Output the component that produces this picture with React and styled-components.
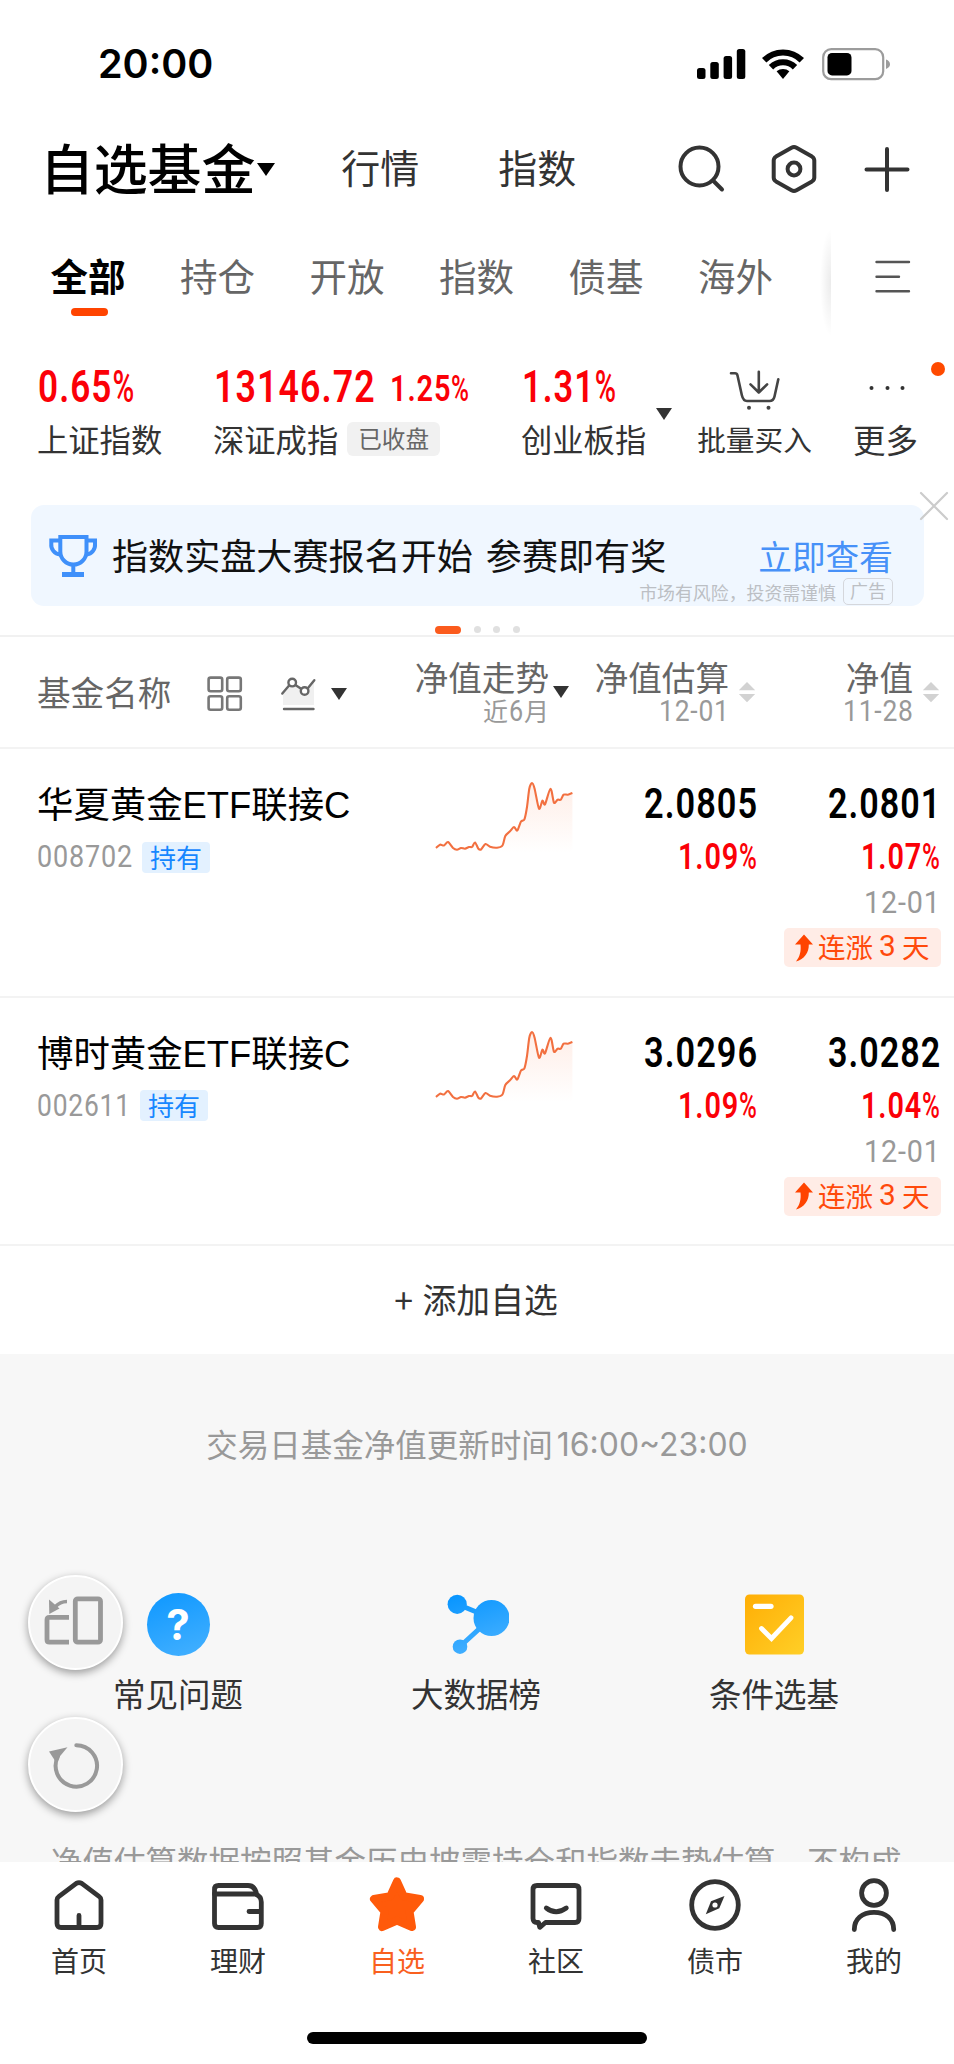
import React, { useLayoutEffect, useRef, useState } from "react";
import styled, { createGlobalStyle, css } from "styled-components";

const CJK = `"Noto Sans CJK SC", "Noto Sans", sans-serif`;
const DIGITS = `Roboto, "Liberation Sans", sans-serif`;
const RED = "#fb0007";
const ORANGE = "#ff4a0c";

const GlobalStyle = createGlobalStyle`
  * { box-sizing: border-box; }
  body { margin: 0; background: #fff; font-family: ${CJK}; }
  svg { display: block; flex: none; }
`;

const Screen = styled.div`
  position: relative;
  width: 954px;
  height: 2064px;
  overflow: hidden;
  display: flex;
  flex-direction: column;
  background: #fff;
  color: #333;
`;

const Text = styled.span`
  display: block;
  flex: none;
  white-space: nowrap;
  font-size: ${(p) => p.$size}px;
  line-height: ${(p) => p.$lh || 40}px;
  font-weight: ${(p) => p.$weight || 400};
  color: ${(p) => p.$color || "#333"};
`;

/* ---------- condensed figures ---------- */

const FigureBox = styled.span`
  display: block;
  flex: none;
  width: ${(p) => p.$width}px;
  height: ${(p) => p.$lh}px;
  line-height: ${(p) => p.$lh}px;
  font-family: ${DIGITS};
  font-size: ${(p) => p.$size}px;
  font-weight: ${(p) => p.$weight};
  color: ${(p) => p.$color};
`;

const FigureText = styled.span`
  display: inline-block;
  white-space: nowrap;
  letter-spacing: 0.03em;
  margin-right: -0.03em;
  transform-origin: 0 50%;
`;

const Percent = styled.span`
  display: inline-block;
  font-weight: 500;
  transform: scaleX(0.84);
  transform-origin: 0 50%;
  margin-right: -0.12em;
`;

function Figure({ children, width, size, lh = 40, weight = 600, color = "#000" }) {
  const ref = useRef(null);
  const [scale, setScale] = useState(1);
  useLayoutEffect(() => {
    setScale(width / (ref.current.offsetWidth - size * 0.03));
  }, [children, width, size]);
  const percent = children.endsWith("%");
  return (
    <FigureBox $width={width} $lh={lh} $size={size} $weight={weight} $color={color}>
      <FigureText ref={ref} style={{ transform: `scaleX(${scale})` }}>
        {percent ? children.slice(0, -1) : children}
        {percent && <Percent>%</Percent>}
      </FigureText>
    </FigureBox>
  );
}

const Caret = styled.i`
  flex: none;
  width: 0;
  height: 0;
  border-left: ${(p) => p.$w / 2}px solid transparent;
  border-right: ${(p) => p.$w / 2}px solid transparent;
  border-top: ${(p) => p.$h}px solid ${(p) => p.$color || "#333"};
`;

/* ---------- status bar ---------- */

const StatusBar = styled.div`
  flex: none;
  height: 108px;
  padding: 19px 64px 0 98px;
  display: flex;
  align-items: center;
`;

const Clock = styled.div`
  flex: 1;
  font: 600 39.5px/48px Inter, sans-serif;
  color: #000;
`;

const Battery = styled.svg`
  margin-left: 17px;
`;
const Wifi = styled.svg`
  margin-left: 15px;
`;

function Status() {
  return (
    <StatusBar>
      <Clock>20:00</Clock>
      <svg width="49" height="32" viewBox="0 0 49 32">
        <rect x="0" y="20" width="8.5" height="11" rx="2.5" />
        <rect x="13.3" y="14" width="8.5" height="17" rx="2.5" />
        <rect x="26.6" y="8" width="8.5" height="23" rx="2.5" />
        <rect x="39.8" y="1" width="8.5" height="30" rx="2.5" />
      </svg>
      <Wifi width="44" height="32" viewBox="0 0 44 32">
        <g fill="none" stroke="#000" strokeWidth="6.2">
          <path d="M3.2 12.3A26.6 26.6 0 0 1 40.8 12.3" />
          <path d="M10 19.2A17 17 0 0 1 34 19.2" />
        </g>
        <path d="M15.6 23.3A9.8 9.8 0 0 1 28.4 23.3L22 31Z" />
      </Wifi>
      <Battery width="68" height="34" viewBox="0 0 68 34">
        <rect x="1.2" y="2.2" width="60" height="30" rx="8" fill="none" stroke="#9c9c9c" strokeWidth="2.2" />
        <rect x="5.5" y="6" width="24" height="22.4" rx="4.5" />
        <path d="M64 12.5q4 1.5 4 4.7t-4 4.7Z" fill="#9c9c9c" />
      </Battery>
    </StatusBar>
  );
}

/* ---------- header ---------- */

const Header = styled.header`
  flex: none;
  height: 122px;
  padding: 0 43px 0 40px;
  display: flex;
  align-items: center;
`;

const PageTitle = styled.h1`
  margin: 0 2px 5px 0;
  font-size: 54px;
  line-height: 60px;
  font-weight: 500;
  letter-spacing: -0.2px;
  color: #000;
`;

const HeaderLink = styled.a`
  margin: 0 0 6px ${(p) => p.$left}px;
  font-size: 39px;
  line-height: 50px;
  color: #333;
`;

const HeaderActions = styled.div`
  margin-left: auto;
  display: flex;
  gap: 45px;
`;

function Top() {
  return (
    <Header>
      <PageTitle>自选基金</PageTitle>
      <Caret $w={19} $h={13} $color="#000" />
      <HeaderLink $left={66}>行情</HeaderLink>
      <HeaderLink $left={79}>指数</HeaderLink>
      <HeaderActions>
        <svg width="48" height="48" viewBox="0 0 48 48" fill="none" stroke="#333" strokeWidth="4" strokeLinecap="round">
          <circle cx="22.5" cy="21.5" r="19" />
          <path d="M36 35.5L45 44.5" />
        </svg>
        <svg width="48" height="48" viewBox="0 0 48 48" fill="none" stroke="#333" strokeWidth="4" strokeLinejoin="round">
          <path d="M21.5 2.8Q24 1.4 26.5 2.8L42 11.6Q44.3 13 44.3 15.6V32.4Q44.3 35 42 36.4L26.5 45.2Q24 46.6 21.5 45.2L6 36.4Q3.7 35 3.7 32.4V15.6Q3.7 13 6 11.6Z" />
          <circle cx="24" cy="24" r="6.4" />
        </svg>
        <svg width="48" height="48" viewBox="0 0 48 48" fill="none" stroke="#333" strokeWidth="4" strokeLinecap="round">
          <path d="M3.5 24.5H44.5M24 4V45" />
        </svg>
      </HeaderActions>
    </Header>
  );
}

/* ---------- category tabs ---------- */

const TabStrip = styled.nav`
  flex: none;
  height: 105px;
  display: flex;
`;

const TabList = styled.div`
  position: relative;
  flex: 1;
  padding-left: 50.5px;
  overflow: hidden;
  display: flex;
  gap: 54.5px;
  &::after {
    content: "";
    position: absolute;
    right: 0;
    top: 0;
    width: 12px;
    height: 105px;
    background: radial-gradient(ellipse 11px 54px at 100% 50%, rgba(0, 0, 0, 0.08), transparent);
  }
`;

const Tab = styled.div`
  flex: none;
  padding-top: 21px;
  display: flex;
  flex-direction: column;
  align-items: center;
  gap: 9px;
  font-size: 37.5px;
  line-height: 48px;
  color: #666;
  ${(p) =>
    p.$active &&
    css`
      font-weight: 700;
      color: #000;
      &::after {
        content: "";
        width: 37px;
        height: 8px;
        margin-left: 2px;
        border-radius: 4px;
        background: #ff4400;
      }
    `}
`;

const TabMenu = styled.div`
  width: 123px;
  padding: 30px 0 0 44px;
`;

/* ---------- index ticker ---------- */

const Ticker = styled.section`
  position: relative;
  flex: none;
  height: 170px;
  padding: 23px 0 0 38px;
  display: flex;
  align-items: flex-start;
`;

const TickerItem = styled.div`
  flex: none;
  width: ${(p) => p.$width}px;
  margin-right: ${(p) => p.$gap || 0}px;
`;

const TickerTop = styled.div`
  height: 60px;
  display: flex;
  align-items: center;
  justify-content: ${(p) => (p.$center ? "center" : "flex-start")};
  gap: 15px;
`;

const TickerBottom = styled.div`
  height: 42px;
  margin-left: -1px;
  display: flex;
  align-items: center;
  justify-content: ${(p) => (p.$center ? "center" : "flex-start")};
  gap: 9px;
`;

const ClosedTag = styled.span`
  height: 34px;
  padding: 0 11px;
  border-radius: 6px;
  background: #f1f1f1;
  color: #666;
  font-size: 23.6px;
  line-height: 32px;
  white-space: nowrap;
`;

const CaretSlot = styled.div`
  width: 16px;
  margin: 50px 26px 0 0;
`;

const UnreadDot = styled.i`
  position: absolute;
  left: 931px;
  top: 31px;
  width: 14px;
  height: 14px;
  margin-top: -4px;
  border-radius: 50%;
  background: #ff4a00;
`;

function Indices() {
  return (
    <Ticker>
      <TickerItem $width={176}>
        <TickerTop><Figure width={96} size={43.5} color={RED}>0.65%</Figure></TickerTop>
        <TickerBottom><Text $size={31.3}>上证指数</Text></TickerBottom>
      </TickerItem>
      <TickerItem $width={308}>
        <TickerTop>
          <Figure width={161} size={43.5} color={RED}>13146.72</Figure>
          <Figure width={79} size={37} lh={37} color={RED}>1.25%</Figure>
        </TickerTop>
        <TickerBottom>
          <Text $size={31.3}>深证成指</Text>
          <ClosedTag>已收盘</ClosedTag>
        </TickerBottom>
      </TickerItem>
      <TickerItem $width={134}>
        <TickerTop><Figure width={94} size={43.5} color={RED}>1.31%</Figure></TickerTop>
        <TickerBottom><Text $size={31.3}>创业板指</Text></TickerBottom>
      </TickerItem>
      <CaretSlot><Caret as="div" $w={16} $h={12} /></CaretSlot>
      <TickerItem $width={114} $gap={41}>
        <TickerTop $center>
          <svg width="52" height="44" viewBox="0 0 52 44" fill="none" stroke="#444" strokeWidth="2.6" strokeLinecap="round" strokeLinejoin="round">
            <path d="M2 7.3H6Q8 7.3 8.5 9.5L12.8 29Q14.2 35 18 35H40.5Q44.5 35 45.5 30.5L49.3 13.3" />
            <path d="M29.8 5.7V26.5M21.5 18.3L29.8 26.5L38.1 18.3" />
            <circle cx="20" cy="41.7" r="2" fill="#444" stroke="none" />
            <circle cx="39.5" cy="41.7" r="2" fill="#444" stroke="none" />
          </svg>
        </TickerTop>
        <TickerBottom $center><Text $size={28.7}>批量买入</Text></TickerBottom>
      </TickerItem>
      <TickerItem $width={66}>
        <TickerTop $center>
          <svg width="40" height="8" viewBox="0 0 40 8" fill="#333">
            <circle cx="5.5" cy="4" r="2" />
            <circle cx="21.5" cy="4" r="2" />
            <circle cx="36.5" cy="4" r="2" />
          </svg>
        </TickerTop>
        <TickerBottom $center><Text $size={32.5}>更多</Text></TickerBottom>
      </TickerItem>
      <UnreadDot />
    </Ticker>
  );
}

/* ---------- promo banner ---------- */

const Banner = styled.section`
  position: relative;
  flex: none;
  width: 893px;
  height: 101px;
  margin-left: 31px;
  padding: 0 31px 0 16px;
  border-radius: 13px;
  background: #f0f7ff;
  display: flex;
  align-items: center;
`;

const BannerTitle = styled.div`
  margin: 0 auto 3px 12px;
  font-size: 36.1px;
  line-height: 48px;
  word-spacing: 5px;
  color: #111;
  white-space: nowrap;
`;

const BannerAside = styled.div`
  display: flex;
  flex-direction: column;
  align-items: flex-end;
  padding-top: 28px;
`;

const BannerAction = styled.a`
  font-size: 33.7px;
  line-height: 44px;
  color: #4791f8;
`;

const Disclaimer = styled.div`
  display: flex;
  align-items: center;
  gap: 7px;
  font-size: 17.9px;
  line-height: 26px;
  margin-left: -160px;
  color: #bcbfc4;
`;

const AdTag = styled.span`
  height: 27px;
  padding: 0 6px;
  border: 1.5px solid #d5d7dc;
  border-radius: 5px;
  font-size: 18px;
  line-height: 23px;
`;

const BannerClose = styled.svg`
  position: absolute;
  right: -25px;
  top: -14px;
`;

const Pager = styled.div`
  flex: none;
  height: 31px;
  padding: 20px 0 0 435px;
  border-bottom: 2px solid #f1f1f1;
  display: flex;
  align-items: flex-start;
  gap: 12.5px;
`;

const PagerDot = styled.i`
  width: ${(p) => (p.$active ? 26 : 7)}px;
  height: ${(p) => (p.$active ? 8 : 7)}px;
  border-radius: 4px;
  background: ${(p) => (p.$active ? "#fb5b1d" : "#e0e0e0")};
`;

function Promo() {
  return (
    <>
      <Banner>
        <svg width="53" height="48" viewBox="0 0 53 48" fill="none" stroke="#3f90fa" strokeWidth="4">
          <path d="M13.3 5H39.5V19.5A13.1 13.1 0 0 1 13.3 19.5Z" />
          <path d="M13 8.5H4.3V12A9.5 9.5 0 0 0 13 22.5M40 8.5H48V12A9.5 9.5 0 0 1 39.5 22.5M26.3 32V42" />
          <path d="M15 42.5H37" strokeWidth="5" />
        </svg>
        <BannerTitle>指数实盘大赛报名开始 参赛即有奖</BannerTitle>
        <BannerAside>
          <BannerAction>立即查看</BannerAction>
          <Disclaimer>
            市场有风险，投资需谨慎<AdTag>广告</AdTag>
          </Disclaimer>
        </BannerAside>
        <BannerClose width="30" height="30" viewBox="0 0 30 30" fill="none" stroke="#ccc" strokeWidth="2.2" strokeLinecap="round">
          <path d="M2 2L28 28M28 2L2 28" />
        </BannerClose>
      </Banner>
      <Pager>
        <PagerDot $active />
        <PagerDot />
        <PagerDot />
        <PagerDot />
      </Pager>
    </>
  );
}

/* ---------- fund table ---------- */

const TableRow = styled.div`
  flex: none;
  height: ${(p) => p.$height}px;
  border-bottom: 2px solid #f3f3f3;
  display: grid;
  grid-template-columns: 415px 156px 186px 184px;
`;

const NameHeading = styled.div`
  padding: 0 0 0 37px;
  display: flex;
  align-items: center;
`;

const ViewIcons = styled.div`
  display: flex;
  align-items: center;
  margin: 3px 0 0 36px;
`;

const ColumnHeading = styled.div`
  padding: ${(p) => (p.$caret ? "0 2px 0 0" : "0 1px 0 0")};
  display: flex;
  justify-content: flex-end;
  align-items: center;
  gap: ${(p) => (p.$caret ? 4 : 9)}px;
`;

const ColumnLabel = styled.div`
  display: flex;
  flex-direction: column;
  align-items: flex-end;
  padding-bottom: 5px;
`;

const ColumnSub = styled.div`
  height: 26px;
  display: flex;
  align-items: center;
  gap: 1px;
`;

const SortIcon = () => (
  <svg width="18" height="22" viewBox="0 0 18 22" fill="#d2d2d2">
    <path d="M9 1L17.2 9.3H.8Z" />
    <path d="M9 21.3L17.2 13H.8Z" />
  </svg>
);

function TableHead() {
  return (
    <TableRow $height={112}>
      <NameHeading>
        <Text $size={33.6} $color="#666">基金名称</Text>
        <ViewIcons>
          <svg width="36" height="36" viewBox="0 0 36 36" fill="none" stroke="#777" strokeWidth="2.6">
            <rect x="1.6" y="1.6" width="13.6" height="13.6" rx="2" />
            <rect x="20.2" y="1.6" width="13.6" height="13.6" rx="2" />
            <rect x="1.6" y="20.2" width="13.6" height="13.6" rx="2" />
            <rect x="20.2" y="20.2" width="13.6" height="13.6" rx="2" />
          </svg>
          <svg width="88" height="36" viewBox="-37 0 88 36" fill="none" stroke="#666" strokeWidth="2.4" strokeLinecap="round">
            <path d="M3 18L12 7L24 15.5L34 5V29H3Z" fill="#f0f0f0" stroke="none" />
            <path d="M2.3 17.6L9.3 9.3M15.4 9L21.5 13M27.8 12.3L34.3 4.3" />
            <circle cx="12.2" cy="6.6" r="3.8" fill="#fff" />
            <circle cx="24.6" cy="15" r="3.8" fill="#fff" />
            <path d="M4 33H33.5" />
          </svg>
          <Caret $w={16} $h={12} />
        </ViewIcons>
      </NameHeading>
      <ColumnHeading $caret>
        <ColumnLabel>
          <Text $size={33.6} $color="#666" $lh={42}>净值走势</Text>
          <ColumnSub>
            <Text $size={25} $lh={25} $color="#999">近</Text>
            <Figure width={14} size={29} lh={28} weight={400} color="#999">6</Figure>
            <Text $size={25} $lh={25} $color="#999">月</Text>
          </ColumnSub>
        </ColumnLabel>
        <Caret $w={16} $h={12} />
      </ColumnHeading>
      <ColumnHeading>
        <ColumnLabel>
          <Text $size={33.6} $color="#666" $lh={42}>净值估算</Text>
          <ColumnSub><Figure width={70} size={29.5} lh={26} weight={400} color="#999">12-01</Figure></ColumnSub>
        </ColumnLabel>
        <SortIcon />
      </ColumnHeading>
      <ColumnHeading>
        <ColumnLabel>
          <Text $size={33.6} $color="#666" $lh={42}>净值</Text>
          <ColumnSub><Figure width={70} size={29.5} lh={26} weight={400} color="#999">11-28</Figure></ColumnSub>
        </ColumnLabel>
        <SortIcon />
      </ColumnHeading>
    </TableRow>
  );
}

const FundCell = styled.div`
  padding: 33px 0 0 37px;
`;

const FundName = styled.div`
  font-family: "Liberation Sans", ${CJK};
  font-size: 36.4px;
  line-height: 48px;
  color: #000;
  white-space: nowrap;
`;

const FundMeta = styled.div`
  height: 50px;
  padding-top: 4px;
  display: flex;
  align-items: center;
  gap: 10px;
`;

const HoldTag = styled.span`
  height: 31px;
  padding: 0 8px;
  border-radius: 4px;
  background: #e3f1ff;
  color: #1687ff;
  font-size: 26px;
  line-height: 29px;
`;

const ChartCell = styled.div`
  padding: 24px 0 0 15px;
`;

const ValueCell = styled.div`
  padding-top: 30px;
  display: flex;
  flex-direction: column;
  align-items: flex-end;
`;

const Inset = styled.div`
  padding-right: 1px;
`;

const StreakTag = styled.div`
  height: 39px;
  width: 157px;
  margin-top: 8px;
  padding-left: 9px;
  border-radius: 5px;
  background: #ffece6;
  display: flex;
  align-items: center;
  gap: 4px;
`;

const StreakText = styled.span`
  display: flex;
  align-items: center;
  gap: 6px;
  padding-bottom: 3px;
`;

const TREND = [
  [6, 75], [10, 71.7], [14, 72.5], [18, 69], [23, 75], [27, 76.7], [31, 75], [35, 75.7], [39, 74], [42, 74],
  [45, 69.5], [48.4, 75.7], [51, 76.5], [55.5, 71], [60, 73.7], [67, 74.7], [72.5, 72.5], [75.3, 63], [80, 58.3],
  [84, 54], [87.3, 57.5], [91, 48.5], [94.4, 46.4], [97, 34], [99.3, 15.7], [102, 10], [104.6, 15.7], [109, 35.7],
  [112.4, 27.7], [115, 31.3], [120.5, 15.7], [124, 29.7], [127.6, 26.7], [130.8, 26.7], [133.6, 21.7], [137.8, 21.7],
  [142.4, 20],
];

// Catmull-Rom spline through the points, with light tension.
function smoothPath(points) {
  let d = `M${points[0][0]} ${points[0][1]}`;
  for (let i = 0; i < points.length - 1; i++) {
    const a = points[i - 1] || points[i];
    const b = points[i];
    const c = points[i + 1];
    const e = points[i + 2] || c;
    const k = 7;
    d += `C${b[0] + (c[0] - a[0]) / k} ${b[1] + (c[1] - a[1]) / k} ${c[0] - (e[0] - b[0]) / k} ${c[1] - (e[1] - b[1]) / k} ${c[0]} ${c[1]}`;
  }
  return d;
}

function Sparkline({ id }) {
  const line = smoothPath(TREND);
  return (
    <svg width="146" height="86" viewBox="0 0 146 86">
      <defs>
        <linearGradient id={id} x1="0" y1="0" x2="0" y2="1">
          <stop offset="0" stopColor="#f96c35" stopOpacity="0.12" />
          <stop offset="1" stopColor="#f96c35" stopOpacity="0" />
        </linearGradient>
      </defs>
      <path d={`${line}V80H6Z`} fill={`url(#${id})`} />
      <path d={line} fill="none" stroke="#f27040" strokeWidth="2.1" strokeLinejoin="round" />
    </svg>
  );
}

function Fund({ name, code, codeWidth, estimate, estimateChange, nav, navChange, date, streak }) {
  return (
    <TableRow $height={248.5}>
      <FundCell>
        <FundName>{name}</FundName>
        <FundMeta>
          <Figure width={codeWidth} size={31} weight={400} color="#999">{code}</Figure>
          <HoldTag>持有</HoldTag>
        </FundMeta>
      </FundCell>
      <ChartCell><Sparkline id={`fill-${code}`} /></ChartCell>
      <ValueCell>
        <Figure width={113} size={42.5} lh={49}>{estimate}</Figure>
        <Figure width={79} size={36.5} lh={57} color={RED}>{estimateChange}</Figure>
      </ValueCell>
      <ValueCell>
        <Inset><Figure width={112} size={42.5} lh={49}>{nav}</Figure></Inset>
        <Inset><Figure width={79} size={36.5} lh={57} color={RED}>{navChange}</Figure></Inset>
        <Inset><Figure width={76} size={31} lh={35} weight={400} color="#999">{date}</Figure></Inset>
        <StreakTag>
          <svg width="21" height="30" viewBox="0 0 21 30" fill="#ff4400">
            <path d="M11 1.5L20 11.5H15.8C16 19.5 11.5 26 3 28.5C7 23.5 8.2 18 7.5 11.5H2Z" />
          </svg>
          <StreakText>
            <Text $size={27.5} $color={ORANGE}>连涨</Text>
            <Figure width={17} size={30} lh={44} weight={400} color={ORANGE}>{streak}</Figure>
            <Text $size={27.5} $color={ORANGE}>天</Text>
          </StreakText>
        </StreakTag>
      </ValueCell>
    </TableRow>
  );
}

const AddFund = styled.button`
  flex: none;
  height: 108px;
  padding: 0 2px 3px 0;
  border: 0;
  background: #fff;
  color: #333;
  font: 400 33.8px/44px ${CJK};
  word-spacing: 2px;
`;

/* ---------- footer area ---------- */

const Footer = styled.section`
  flex: none;
  height: 508px;
  overflow: hidden;
  background: #f7f7f7;
`;

const UpdateNote = styled.div`
  height: 48px;
  margin-top: 66px;
  display: flex;
  justify-content: center;
  gap: 4px;
`;

const NoteTime = styled.span`
  font: 400 31.9px/50px Inter, sans-serif;
  color: #999;
`;

const Shortcuts = styled.div`
  margin-top: 124px;
  padding: 0 29px;
  display: grid;
  grid-template-columns: repeat(3, 298px);
`;

const Shortcut = styled.div`
  display: flex;
  flex-direction: column;
  align-items: center;
  gap: 14px;
`;

const HelpIcon = styled.div`
  width: 63px;
  height: 63px;
  margin: 1px 0;
  border-radius: 50%;
  background: linear-gradient(160deg, #0d97ff, #45b1ff);
  color: #fff;
  text-align: center;
  font: 700 42px/64px Inter, sans-serif;
`;

const LegalNote = styled.div`
  margin: 121px 0 0 51px;
  font-size: 31.5px;
  line-height: 48px;
  color: #999;
  white-space: nowrap;
`;

const FloatingTools = styled.div`
  position: absolute;
  left: 28px;
  top: 1575px;
  display: flex;
  flex-direction: column;
  gap: 47px;
`;

const RoundButton = styled.div`
  width: 95px;
  height: 95px;
  border-radius: 50%;
  border: 2px solid #fff;
  background: #f4f4f4;
  box-shadow: 0 3px 8px rgba(0, 0, 0, 0.38);
  display: flex;
  align-items: center;
  justify-content: center;
`;

function Tools() {
  return (
    <FloatingTools>
      <RoundButton>
        <svg width="95" height="95" viewBox="0 0 95 95" fill="none" stroke="#999" strokeWidth="4.8">
          <rect x="47.3" y="23.8" width="25.2" height="43.4" rx="2.5" />
          <path d="M41 42.3H21.5Q19 42.3 19 44.8V64.7Q19 67.2 21.5 67.2H41" />
          <path d="M39 26.5Q32 26.5 27 32" strokeWidth="3.6" />
          <path d="M21 24.5L31.5 33.5L21.3 39Z" fill="#999" stroke="none" />
        </svg>
      </RoundButton>
      <RoundButton>
        <svg width="95" height="95" viewBox="0 0 95 95" fill="none" stroke="#999" strokeWidth="4" strokeLinecap="round">
          <path d="M48.3 28.2A20.7 20.7 0 1 1 30 39.3" />
          <path d="M21 34.5L39.5 30.3L27.5 44.5Z" fill="#999" stroke="none" />
        </svg>
      </RoundButton>
    </FloatingTools>
  );
}

function Bottom() {
  return (
    <Footer>
      <UpdateNote>
        <Text $size={31.5} $lh={47} $color="#999">交易日基金净值更新时间</Text>
        <NoteTime>16:00~23:00</NoteTime>
      </UpdateNote>
      <Shortcuts>
        <Shortcut>
          <HelpIcon>?</HelpIcon>
          <Text $size={32.5} $lh={44}>常见问题</Text>
        </Shortcut>
        <Shortcut>
          <svg width="65" height="65" viewBox="0 0 65 65">
            <defs>
              <linearGradient id="molecule" gradientUnits="userSpaceOnUse" x1="10" y1="0" x2="30" y2="60">
                <stop offset="0" stopColor="#0594ff" />
                <stop offset="1" stopColor="#42afff" />
              </linearGradient>
            </defs>
            <g fill="url(#molecule)" stroke="none">
              <circle cx="13.2" cy="12.3" r="9.6" />
              <circle cx="47.5" cy="26" r="18" />
              <circle cx="16" cy="54.7" r="7.3" />
            </g>
            <path d="M13 12L47 26L16 54.5" fill="none" stroke="url(#molecule)" strokeWidth="5" />
          </svg>
          <Text $size={32.5} $lh={44}>大数据榜</Text>
        </Shortcut>
        <Shortcut>
          <svg width="65" height="65" viewBox="0 0 65 65" fill="none" stroke="#fff" strokeWidth="5.2" strokeLinecap="round">
            <defs>
              <linearGradient id="amber" x1="0" y1="0" x2="1" y2="1">
                <stop offset="0" stopColor="#ffae05" />
                <stop offset="1" stopColor="#ffcf27" />
              </linearGradient>
            </defs>
            <rect x="3" y="2.5" width="59" height="60" rx="4.5" fill="url(#amber)" stroke="none" />
            <path d="M13.5 14.3H29" />
            <path d="M19.5 36.5L29.5 46.5L49 25.8" strokeWidth="4.8" />
          </svg>
          <Text $size={32.5} $lh={44}>条件选基</Text>
        </Shortcut>
      </Shortcuts>
      <LegalNote>净值估算数据按照基金历史披露持仓和指数走势估算，不构成</LegalNote>
    </Footer>
  );
}

/* ---------- tab bar ---------- */

const TabBar = styled.nav`
  flex: none;
  height: 203px;
  background: #fff;
  display: flex;
  flex-direction: column;
  align-items: center;
`;

const TabBarItems = styled.div`
  width: 954px;
  height: 170px;
  padding-top: 12px;
  display: grid;
  grid-template-columns: repeat(6, 159px);
`;

const TabBarItem = styled.div`
  padding-right: 1px;
  display: flex;
  flex-direction: column;
  align-items: center;
  gap: 6px;
`;

const HomeIndicator = styled.div`
  width: 340px;
  height: 12px;
  border-radius: 6px;
  background: #000;
`;

const NAV = [
  {
    label: "首页",
    icon: (
      <path d="M8 26Q8 23.8 9.7 22.6L27.3 9.4Q30 7.8 32.7 9.4L50.3 22.6Q52 23.8 52 26V49.5Q52 53.5 48 53.5H12Q8 53.5 8 49.5ZM30 41.5V53" />
    ),
  },
  {
    label: "理财",
    icon: (
      <>
        <path d="M6.5 20V15.5Q6.5 11.5 10.5 11.5H40Q47 11.5 48.5 20" />
        <path d="M6.5 20H47Q53.3 22 53.3 28V49.5Q53.3 53.5 49.3 53.5H10.5Q6.5 53.5 6.5 49.5ZM41 37.5H53" />
      </>
    ),
  },
  {
    label: "自选",
    active: true,
    icon: (
      <path
        d="M30 7.5L36.8 22.3L53 25L42.5 37.5L45 53L30 46.5L15 53L17.5 37.5L7 25L23.2 22.3Z"
        fill="#ff5a0a"
        stroke="#ff5a0a"
        strokeWidth="8"
      />
    ),
  },
  {
    label: "社区",
    icon: (
      <>
        <path d="M11 11.5H49Q53 11.5 53 15.5V44.5Q53 48.5 49 48.5H19.5L13.8 53.3L12.5 48.5H11Q7 48.5 7 44.5V15.5Q7 11.5 11 11.5Z" />
        <path d="M20.3 34Q30 41.5 40.3 34" />
      </>
    ),
  },
  {
    label: "债市",
    icon: (
      <>
        <circle cx="30" cy="31" r="23.3" />
        <path d="M39.5 22L34.3 34.2L20.8 40.3L26 27.2Z" fill="#333" stroke="none" />
        <circle cx="30" cy="31" r="2.6" fill="#fff" stroke="none" />
      </>
    ),
  },
  {
    label: "我的",
    icon: (
      <>
        <circle cx="30" cy="19" r="12.4" />
        <path d="M10.3 55.5C10.3 45 18 38.3 30 38.3S49.7 45 49.7 55.5" />
      </>
    ),
  },
];

export default function App() {
  return (
    <Screen>
      <GlobalStyle />
      <Status />
      <Top />
      <TabStrip>
        <TabList>
          {["全部", "持仓", "开放", "指数", "债基", "海外"].map((t, i) => (
            <Tab key={t} $active={i === 0}>{t}</Tab>
          ))}
        </TabList>
        <TabMenu>
          <svg width="36" height="34" viewBox="0 0 36 34" fill="none" stroke="#555" strokeWidth="2.4" strokeLinecap="round">
            <path d="M1.5 2H34M1.5 16.7H24M1.5 31.3H34" />
          </svg>
        </TabMenu>
      </TabStrip>
      <Indices />
      <Promo />
      <TableHead />
      <Fund name="华夏黄金ETF联接C" code="008702" codeWidth={95} estimate="2.0805" estimateChange="1.09%" nav="2.0801" navChange="1.07%" date="12-01" streak="3" />
      <Fund name="博时黄金ETF联接C" code="002611" codeWidth={93} estimate="3.0296" estimateChange="1.09%" nav="3.0282" navChange="1.04%" date="12-01" streak="3" />
      <AddFund>+ 添加自选</AddFund>
      <Bottom />
      <TabBar>
        <TabBarItems>
          {NAV.map((n) => (
            <TabBarItem key={n.label}>
              <svg width="60" height="60" viewBox="0 0 60 60" fill="none" stroke="#333" strokeWidth="4.8" strokeLinecap="round" strokeLinejoin="round">
                {n.icon}
              </svg>
              <Text $size={28} $color={n.active ? "#f9601f" : "#333"}>{n.label}</Text>
            </TabBarItem>
          ))}
        </TabBarItems>
        <HomeIndicator />
      </TabBar>
      <Tools />
    </Screen>
  );
}
